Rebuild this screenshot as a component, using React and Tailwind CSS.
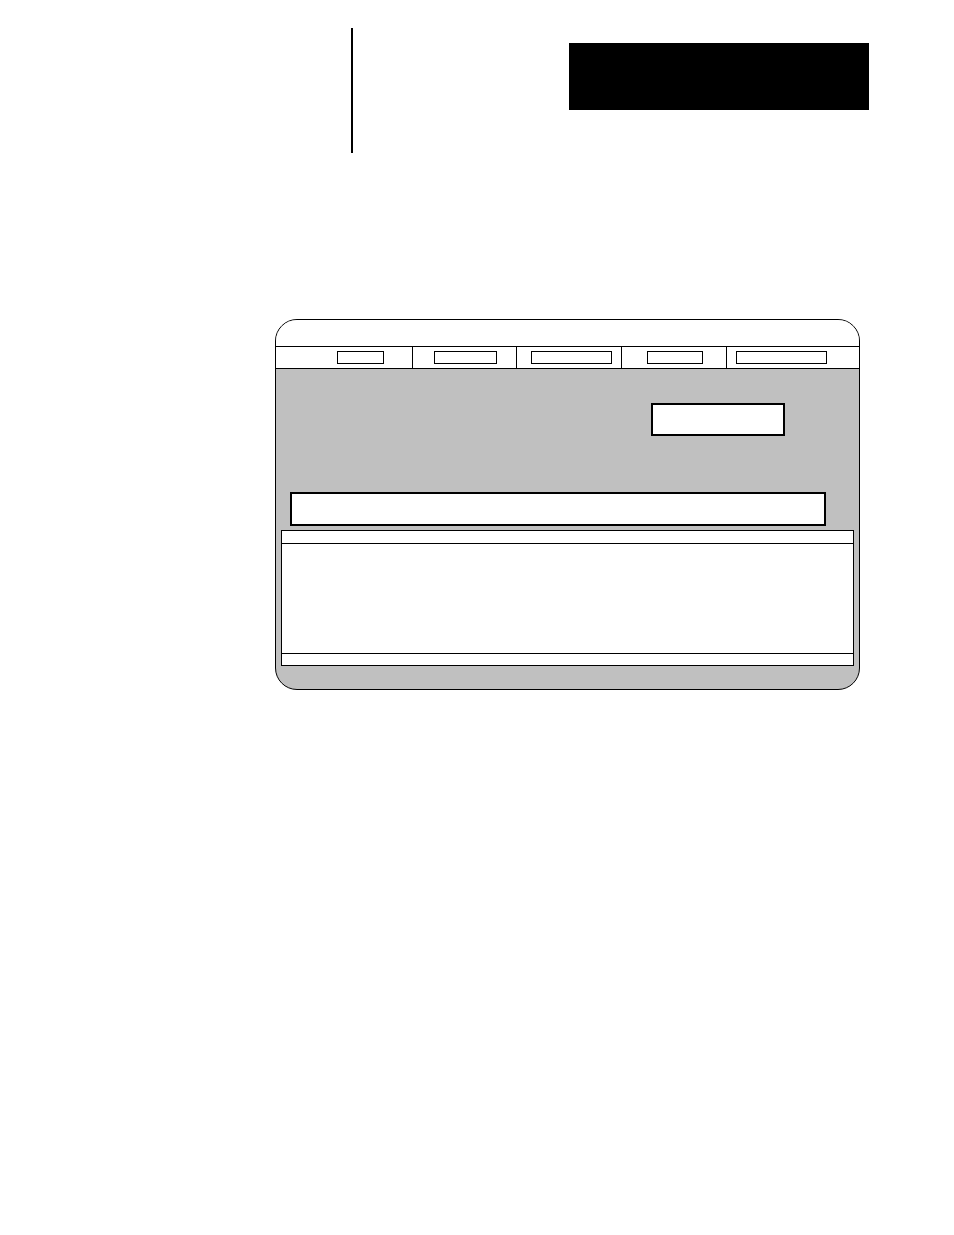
export default function App() {
  const tabs = [
    { w: "w-[136px]", pl: "pl-[61px]", box: "w-[47px]" },
    { w: "w-[104px]", pl: "pl-[21px]", box: "w-[63px]" },
    { w: "w-[105px]", pl: "pl-[14px]", box: "w-[81px]" },
    { w: "w-[105px]", pl: "pl-[25px]", box: "w-[56px]" },
    { w: "flex-1", pl: "pl-[9px]", box: "w-[91px]" },
  ];

  return (
    <div className="w-[954px] h-[1235px] bg-white font-['Liberation_Sans',sans-serif] overflow-hidden">
      {/* page header: rule + black tab */}
      <div className="flex pt-[28px]">
        <div className="ml-[351px] w-[2px] h-[125px] bg-black" />
        <div className="ml-[216px] mt-[15px] w-[300px] h-[67px] bg-black" />
      </div>

      {/* screen panel */}
      <div className="mt-[166px] ml-[275px] w-[585px] h-[371px] border border-black rounded-[22px] overflow-hidden flex flex-col bg-[#c0c0c0]">
        <div className="h-[27px] bg-white border-b border-black shrink-0" />
        <div className="h-[22px] bg-white border-b border-black flex shrink-0">
          {tabs.map((t, i) => (
            <div
              key={i}
              className={`${t.w} ${t.pl} h-full flex items-center ${i > 0 ? "border-l border-black" : ""}`}
            >
              <div className={`${t.box} h-[13px] border border-black`} />
            </div>
          ))}
        </div>

        <div className="flex-1 flex flex-col">
          <div className="ml-[375px] mt-[34px] w-[134px] h-[33px] bg-white border-2 border-black" />
          <div className="ml-[14px] mt-[56px] w-[536px] h-[34px] bg-white border-2 border-black" />
          <div className="ml-[5px] mt-[4px] w-[573px] h-[136px] bg-white border border-black flex flex-col">
            <div className="h-[13px] border-b border-black" />
            <div className="flex-1" />
            <div className="h-[12px] border-t border-black" />
          </div>
        </div>
      </div>
    </div>
  );
}
